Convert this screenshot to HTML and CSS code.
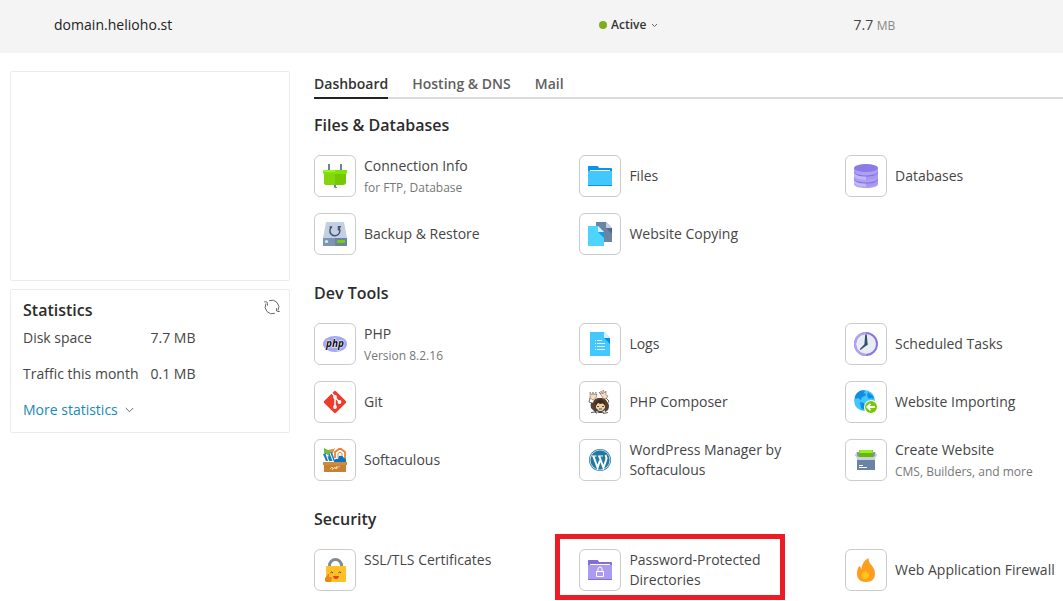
FILE: index.html
```html
<!DOCTYPE html>
<html lang="en">
<head>
<meta charset="utf-8">
<title>domain.helioho.st</title>
<link rel="stylesheet" href="styles.css">
</head>
<body>
<header class="domain-bar">
  <span class="domain-name">domain.helioho.st</span>
  <span class="status"><i class="status-dot"></i>Active<svg class="status-caret" width="7" height="5" viewBox="0 0 7 5"><path d="M1 1l2.500 2.500L6 1" fill="none" stroke="#666"/></svg></span>
  <span class="usage">7.7 <small>MB</small></span>
</header>
<div class="layout">
  <aside class="sidebar">
    <div class="preview"></div>
    <section class="stats">
      <div class="stats-head"><h2>Statistics</h2>
        <svg class="refresh" width="16" height="16" viewBox="0 0 16 16" fill="none" stroke="#666"><path d="M5.2 1.7A7 7 0 0 1 14 11.5M10.8 14.3A7 7 0 0 1 2 4.5M.3 2.8L2.4 2.8Q3.5 3 3.5 4.5V6.5M15.7 12.5H13.6Q12.5 12.5 12.5 11V9.2"/></svg>
      </div>
      <dl><dt>Disk space</dt><dd>7.7 MB</dd><dt>Traffic this month</dt><dd>0.1 MB</dd></dl>
      <a class="more">More statistics<svg width="9" height="6" viewBox="0 0 9 6"><path d="M.8 1l3.7 3.7L8.2 1" fill="none" stroke="#666"/></svg></a>
    </section>
  </aside>
  <main class="main">
    <nav class="tabs"><a class="tab tab-active">Dashboard</a><a class="tab">Hosting &amp; DNS</a><a class="tab">Mail</a></nav>

    <section class="group">
      <h2>Files &amp; Databases</h2>
      <div class="tiles">
        <a class="tile"><span class="icon"><svg viewBox="0 0 24 24"><path d="M5 0h2v7H5zM17 0h2v7h-2zM11 21h2v2h1v1h-2l-1-1z" fill="#6b84a4"/><path d="M1 9h22v9q0 3-3 3H4q-3 0-3-3z" fill="#75c900"/><path d="M1 9h11v12H4q-3 0-3-3z" fill="#84d60c"/><path d="M1 9h22v1H1z" fill="#66b900"/><path d="M0 6h24v3l-1 1H1L0 9z" fill="#80e400"/><path d="M0 6h12v2H0z" fill="#9bf51e"/></svg></span>
          <span class="label top">Connection Info<small>for FTP, Database</small></span></a>
        <a class="tile"><span class="icon"><svg viewBox="0 0 24 24"><path d="M0 2.500Q0 2 .5 2h9q.5 0 .7.5l.8 1.500h12q1 0 1 1v17H0z" fill="#0795ed"/><path d="M2 6h20v2H2z" fill="#fff"/><path d="M0 7h24v14H0z" fill="#42c8ff"/></svg></span><span class="label">Files</span></a>
        <a class="tile"><span class="icon"><svg viewBox="0 0 24 24"><path d="M0 4v16c0 5.3 24 5.3 24 0V4z" fill="#ad9ff5"/><path d="M0 7c0 6 24 6 24 0v3c0 6-24 6-24 0zM0 14c0 6 24 6 24 0v3c0 6-24 6-24 0z" fill="#7f6ed6"/><path d="M0 8.500c2 3.500 7 4 12 4v3.200C6 15.700 2 15 0 12zM0 15.500c2 3.500 7 4 12 4v3.200C6 22.700 2 22 0 19z" fill="#c1b7fa"/><path d="M12 12.500c6 0 10-1 12-4v3c-2 3-6 4.200-12 4.200zM12 19.500c6 0 10-1 12-4v3c-2 3-6 4.200-12 4.200z" fill="#a797f2"/><ellipse cx="12" cy="4" rx="12" ry="4" fill="#8c7ae6"/></svg></span><span class="label">Databases</span></a>
        <a class="tile"><span class="icon"><svg viewBox="0 0 24 24"><path d="M4 0h16q1 0 1.200 1L24 16H0L2.800 1Q3 0 4 0z" fill="#c5cfe2"/><path d="M0 16h24v8H0z" fill="#6b84a4"/><path d="M0 16h12v8H0z" fill="#8095b3"/><circle cx="3.500" cy="19.500" r="1.600" fill="#c5f2ff"/><rect x="14" y="18" width="8" height="3" rx=".7" fill="#78cf08"/><path d="M8.800 4.800A5 5 0 1 0 15.500 5.300M6.500 5h2.700M15.500 8.500V4.700h2.500" fill="none" stroke="#3f5677" stroke-width="1.500"/></svg></span><span class="label">Backup &amp; Restore</span></a>
        <a class="tile"><span class="icon"><svg viewBox="0 0 24 24"><path d="M8 0h10l6 6v14H8z" fill="#6b84a4"/><path d="M18 6h6v6z" fill="#536c8c"/><path d="M18 0l6 6h-6z" fill="#c5d1e2"/><path d="M0 4h10l6 6v14H0z" fill="#4fd3ff"/><path d="M10 10h6v6z" fill="#159de8"/><path d="M10 4l6 6h-6z" fill="#d4f3ff"/></svg></span><span class="label">Website Copying</span></a>
      </div>
    </section>

    <section class="group">
      <h2>Dev Tools</h2>
      <div class="tiles">
        <a class="tile"><span class="icon"><svg viewBox="0 0 24 24"><ellipse cx="12" cy="12" rx="12" ry="8" fill="#a5a8f3"/><text class="php-word" x="12" y="14.500">php</text></svg></span><span class="label top">PHP<small>Version 8.2.16</small></span></a>
        <a class="tile"><span class="icon"><svg viewBox="0 0 24 24"><path d="M2 0h14l6 6v18H2z" fill="#42c8ff"/><path d="M16 6h6v6z" fill="#078cec"/><path d="M16 0l6 6h-6z" fill="#d5efff"/><path d="M7 8.500h1M9 8.500h5M7 11.500h1M9 11.500h8M7 14.500h1M9 14.500h8M7 17.500h1M9 17.500h8" stroke="#e8faff"/></svg></span><span class="label">Logs</span></a>
        <a class="tile"><span class="icon"><svg viewBox="0 0 24 24"><circle cx="12" cy="12" r="11" fill="#e8edf2" stroke="#8977df" stroke-width="2"/><path d="M12 1a11 11 0 0 0 0 22" fill="none" stroke="#b1a2f5" stroke-width="2"/><path d="M11.200 2.500h1.600l.7 8.500a1.800 1.800 0 0 1-1.500 2.800L6.500 18l-.8-.8 4.700-5z" fill="#36506d"/></svg></span><span class="label">Scheduled Tasks</span></a>
        <a class="tile"><span class="icon"><svg viewBox="0 0 24 24"><rect x="3.700" y="3.700" width="16.600" height="16.600" rx="1.300" transform="rotate(45 12 12)" fill="#ef3b2d"/><path d="M8.500 2.800L12 6.500v11M12 7.500l4.500 4.500" fill="none" stroke="#fff" stroke-width="1.500"/><g fill="#fff"><circle cx="12" cy="7" r="1.900"/><circle cx="12" cy="17" r="1.900"/><circle cx="16.500" cy="12" r="1.900"/></g></svg></span><span class="label">Git</span></a>
        <a class="tile"><span class="icon"><svg viewBox="0 0 24 24"><path d="M3 13q-1 2 0 5l4 4 2 1h7l4-3q2-4 0-7l-3-1H7z" fill="#4b4640"/><path d="M5 16q-1-7 5-8h4q6 1 6 8l-3 4H8z" fill="#5f3d25"/><path d="M2 2l2 3 1-3 1 3 2-3v3l1-1-1 4-3 2-3-2zM11 2l2 2v-3l2 3V0l2 3 1-2v4l2 1-2 3-3-1-2-3z" fill="#f6dcc1" stroke="#655346" stroke-width=".5"/><path d="M2 8l-1 4 3 1M18 8l3 3-2 3" fill="none" stroke="#504740" stroke-width=".8"/><path d="M8 15l2-2 3 1 4-1v5l-3 3h-3l-3-3z" fill="#efd0b3"/><path d="M8 16l2-4 2 2 2-2 3 4V12l-4-3-4 2-2 2z" fill="#3e291d"/><path d="M9 16.500h2M14 16.500h2M11 19h3M3 22.500l4-.5 2 1.500M15 23.500l5-1" fill="none" stroke="#35302b" stroke-width=".8"/><path d="M8 21l3 1-2 1zM17 20l-3 2 3 1z" fill="#ddd"/></svg></span><span class="label">PHP Composer</span></a>
        <a class="tile"><span class="icon"><svg viewBox="0 0 24 24"><circle cx="10.500" cy="10.500" r="10.500" fill="#42c8ff"/><path d="M3 3q4-4 8-2l-1 2 2 1-1 2-3 1-1 3-3-2-3 1q0-4 2-6zM14 2l5 4 1 3-3-1-2 1-2-3zM6 12l4 1 2 3-3 4-2-2zM14 11l3-1 3 3-3 2z" fill="#118ee2"/><circle cx="17" cy="17" r="7" fill="#fff"/><circle cx="17" cy="17" r="6" fill="#78c900"/><path d="M21 17h-7M16.500 13.800L13.300 17l3.200 3.200" fill="none" stroke="#fff" stroke-width="1.900"/></svg></span><span class="label">Website Importing</span></a>
        <a class="tile"><span class="icon"><svg viewBox="0 0 24 24"><path d="M1 0l4 2 5-1-1 4-4 2-4-2z" fill="#72bd45"/><path d="M5 4l7-4-2 5z" fill="#f18b34"/><path d="M0 6l3-1 2 5 1-5 3-1 3 9H3z" fill="#197fb5"/><path d="M3 6l3 8M7 5l3 8" stroke="#fff"/><path d="M12 10V4l4-3h2l4 3v7" fill="#fff" stroke="#ed7e37" stroke-width="1.800"/><path d="M15 10V5.500l2-1.500 2 1.500V10" fill="none" stroke="#ed7e37"/><path d="M11 13q1-3 4-2l1-3q4-1 5 2l2 1v3H11z" fill="#0676c3"/><path d="M0 14h24v1H0z" fill="#8a5b29"/><path d="M1 15h22v9H1z" fill="#c88034"/><path d="M0 14h24v3H0z" fill="#d08a3e"/><path d="M7 21l2-2 1 1-1 2 3-3v2l2-3-1 3 4-3" fill="none" stroke="#f0d6ae" stroke-width=".9"/></svg></span><span class="label">Softaculous</span></a>
        <a class="tile"><span class="icon"><svg viewBox="0 0 24 24"><circle cx="12" cy="12" r="11" fill="#2479a3"/><circle cx="12" cy="12" r="10" fill="none" stroke="#cfe1ea" stroke-width=".9"/><path d="M3.500 8h5M10 8h5" stroke="#fff"/><path d="M5.300 8l4.300 11.500L12 12.500M11.200 8l4.200 11.500L18 12.500q1-3-.5-5.500" fill="none" stroke="#fff" stroke-width="2"/></svg></span><span class="label">WordPress Manager by Softaculous</span></a>
        <a class="tile"><span class="icon"><svg viewBox="0 0 24 24"><path d="M3 4L.5 7 3 10zM21 4l2.500 3-2.500 3z" fill="#c5d1e3"/><path d="M3 4h18v7H3z" fill="#8496af"/><path d="M6 2h12q1 0 1 1v7H5V3q0-1 1-1z" fill="#67b900"/><path d="M7 2h10q1 0 1.300 1l.7 2H5l.7-2Q6 2 7 2z" fill="#94ee28"/><path d="M3 8l2 1h14l2-1v4H3z" fill="#c5d1e3"/><path d="M5 6h14v3H5z" fill="#67b900"/><path d="M3 12h18v10H3z" fill="#6b84a4"/><path d="M5 17.500h4M5 19.500h8" stroke="#fff"/></svg></span><span class="label top">Create Website<small>CMS, Builders, and more</small></span></a>
      </div>
    </section>

    <section class="group">
      <h2>Security</h2>
      <div class="tiles">
        <a class="tile"><span class="icon"><svg viewBox="0 0 24 24"><path d="M6.500 9V7.500a6 6 0 0 1 12 0V9" fill="none" stroke="#7c8c99" stroke-width="3"/><path d="M4 8h18q1 0 1 1v14q0 1-1 1H3V9q0-1 1-1z" fill="#ffc027"/><path d="M7.500 15q1-2 2.500 0M15.500 15q1-2 2.500 0" fill="none" stroke="#58402c"/><path d="M10 18h6q-.3 3-3 3t-3-3z" fill="#df4426"/><path d="M5 16h1v3h2q1 .2.700 2L8 24H3l-1-1v-3l2-2z" fill="#e88a12"/></svg></span><span class="label top">SSL/TLS Certificates</span></a>
        <a class="tile highlighted"><span class="icon"><svg viewBox="0 0 24 24"><path d="M0 2.500Q0 2 .5 2h9q.5 0 .7.5l.8 1.500h12q1 0 1 1v17H0z" fill="#806fd9"/><path d="M2 6h20v2H2z" fill="#fff"/><path d="M0 7h24v14H0z" fill="#aa9bf0"/><path d="M8.500 13.500h7v5h-7zM10 13.500V11q0-2 2-2t2 2v2.500" fill="none" stroke="#fff"/></svg></span><span class="label">Password-Protected Directories</span></a>
        <a class="tile"><span class="icon"><svg viewBox="0 0 24 24"><path d="M14.500 0c0 3 1 5 2.500 6.500C19 9 21 11.500 21 15.500c0 5-3 8.500-9 8.500s-9-3.500-9-8c0-4 1-6.500 2.500-8 1 1 1.500 2 2 3.500C7.500 7 10 2.500 14.500 0z" fill="#ff9d1e"/><path d="M11.500 12c.3 2 1.500 2.500 3 3.500 2 2.500 0 5.500-3 5.500S7.500 19 8 16.500c.3-1 1-2 1.300-2.500l1 .8z" fill="#ffc817"/></svg></span><span class="label">Web Application Firewall</span></a>
      </div>
    </section>
  </main>
</div>
</body>
</html>
```
FILE: styles.css
```css
*, *::before { box-sizing: border-box; }
body {
  margin: 0;
  height: 601px;
  overflow: hidden;
  background: #fff;
  color: #464646;
  font: 14px/20px "Open Sans", sans-serif;
}
h2 { margin: 0; color: #2c2c2c; font-size: 16px; font-weight: 600; line-height: 24px; }
.domain-bar {
  display: grid;
  grid-template-columns: 545px 254.5px 1fr;
  align-items: center;
  height: 53px;
  padding: 0 0 3px 54px;
  background: #f4f4f4;
  color: #222;
}
.domain-name { font-weight: 500; letter-spacing: .03px; }
.status { display: flex; align-items: center; color: #333; font-size: 12px; font-weight: 600; }
.status-dot { width: 8px; height: 8px; margin-right: 4px; border-radius: 50%; background: #7fae1b; }
.status-caret { margin-left: 5px; }
.usage { color: #464646; }
.usage small { color: #888; font-size: 12px; }
.layout { display: grid; grid-template-columns: 280px 749px; gap: 24px; padding: 18px 0 0 10px; }
.preview { height: 210px; margin-bottom: 8px; border: 1px solid #ebebeb; border-radius: 2px; }
.stats { height: 144px; padding: 8px 9px 0 12px; border: 1px solid #ebebeb; border-radius: 2px; }
.stats-head { display: flex; justify-content: space-between; }
.refresh { margin-top: 1px; }
dl { display: grid; grid-template-columns: 127.5px 1fr; row-gap: 16px; margin: 6px 0 16px; }
dt, dd { margin: 0; }
.more { display: flex; align-items: center; gap: 7px; color: #178ab5; }
.tabs { display: flex; gap: 24px; height: 28px; padding-top: 3px; border-bottom: 2px solid #dadada; }
.tab { height: 25px; font-weight: 600; color: #606060; }
.tab-active { border-bottom: 2px solid #222; color: #333; }
.group { margin-top: 14px; }
.group + .group { margin-top: 26px; }
.tiles { display: grid; grid-template-columns: 265.4px 265.6px 218px; grid-auto-rows: 42px; row-gap: 16px; margin-top: 18px; }
.tile { position: relative; display: flex; align-items: center; gap: 8px; }
.icon { display: flex; flex: none; width: 42px; height: 42px; padding: 8px; border: 1px solid #ccc; border-radius: 6px; }
.icon svg { width: 24px; height: 24px; overflow: visible; }
.php-word { font: italic 700 10px "Open Sans", sans-serif; text-anchor: middle; fill: #111; stroke: #fff; stroke-width: 1px; paint-order: stroke; }
.label { max-width: 170px; }
.label.top { align-self: flex-start; padding-top: 1px; }
.label small { display: block; margin-top: 2px; color: #777; font-size: 12px; }
.highlighted::before {
  content: "";
  position: absolute;
  left: -24px;
  top: -15px;
  width: 230px;
  height: 66px;
  border: 5px solid #ed1c24;
}
```
